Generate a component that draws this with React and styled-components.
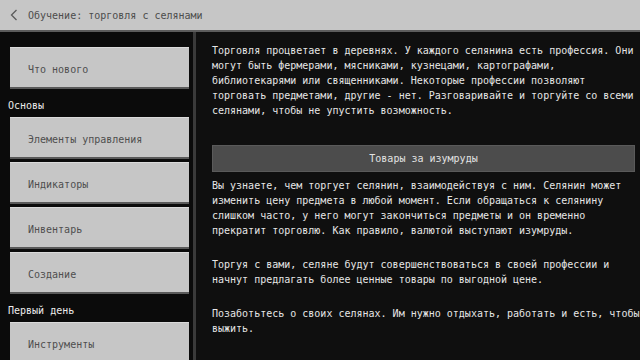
import React from "react";
import styled, { createGlobalStyle } from "styled-components";

const Global = createGlobalStyle`
  html, body { margin: 0; padding: 0; background: #0e0e0e; }
  body { width: 640px; height: 360px; overflow: hidden; font-family: "DejaVu Sans Mono", "Liberation Mono", monospace; }
  * { box-sizing: border-box; }
`;

const Screen = styled.div`
  width: 640px;
  height: 360px;
  display: flex;
  flex-direction: column;
  overflow: hidden;
`;

const Header = styled.div`
  height: 32px;
  flex: none;
  background: #c6c6c6;
  border-bottom: 2px solid #5c5c5c;
  display: flex;
  align-items: center;
  padding-left: 10px;
  gap: 10px;
`;

const Title = styled.span`
  font-size: 10px;
  color: #4c4c4c;
  line-height: 1;
  padding-top: 2px;
`;

const Body = styled.div`
  flex: 1;
  display: flex;
  min-height: 0;
`;

const Sidebar = styled.div`
  width: 193px;
  flex: none;
  background: #0b0b0b;
  padding: 15px 4px 0 10px;
  display: flex;
  flex-direction: column;
  overflow: hidden;
`;

const Divider = styled.div`
  width: 3px;
  flex: none;
  background: #3a3a3a;
`;

const NavButton = styled.div`
  height: 42px;
  flex: none;
  margin-bottom: 3px;
  background: #c6c6c6;
  border-top: 1px solid #dadada;
  border-bottom: 2px solid #5a5a5a;
  display: flex;
  align-items: center;
  padding: 3px 0 0 18px;
  font-size: 10px;
  color: #4e4e4e;
`;

const SectionLabel = styled.div`
  height: 25px;
  flex: none;
  display: flex;
  align-items: center;
  padding-top: 1px;
  margin-left: -2px;
  font-size: 10px;
  color: #ececec;
`;

const Content = styled.div`
  flex: 1;
  background: #0f0f0f;
  padding: 11px 0 0 16px;
  overflow: hidden;
`;

const Para = styled.p`
  margin: 0 0 19px;
  width: 429px;
  font-size: 10px;
  line-height: 15px;
  color: #e6e6e6;
`;

const Bar = styled.div`
  width: 423px;
  height: 27px;
  margin: 27px 0 6px;
  background: #4c4c4c;
  border: 1px solid #5a5a5a;
  display: flex;
  align-items: center;
  justify-content: center;
  font-size: 10px;
  color: #e2e2e2;
`;

const BackIcon = () => (
  <svg width="8" height="12" viewBox="0 0 8 12">
    <polyline points="6.5,1 1.5,6 6.5,11" fill="none" stroke="#5a5a5a" strokeWidth="1.3" />
  </svg>
);

const nav = [
  { type: "btn", text: "Что нового" },
  { type: "label", text: "Основы" },
  { type: "btn", text: "Элементы управления" },
  { type: "btn", text: "Индикаторы" },
  { type: "btn", text: "Инвентарь" },
  { type: "btn", text: "Создание" },
  { type: "label", text: "Первый день" },
  { type: "btn", text: "Инструменты" },
];

export default function App() {
  return (
    <Screen>
      <Global />
      <Header>
        <BackIcon />
        <Title>Обучение: торговля с селянами</Title>
      </Header>
      <Body>
        <Sidebar>
          {nav.map((n, i) =>
            n.type === "btn" ? (
              <NavButton key={i}>{n.text}</NavButton>
            ) : (
              <SectionLabel key={i}>{n.text}</SectionLabel>
            )
          )}
        </Sidebar>
        <Divider />
        <Content>
          <Para style={{ marginBottom: 0 }}>
            Торговля процветает в деревнях. У каждого селянина есть профессия. Они могут быть фермерами, мясниками, кузнецами, картографами, библиотекарями или священниками. Некоторые профессии позволяют торговать предметами, другие - нет. Разговаривайте и торгуйте со всеми селянами, чтобы не упустить возможность.
          </Para>
          <Bar>Товары за изумруды</Bar>
          <Para>
            Вы узнаете, чем торгует селянин, взаимодействуя с ним. Селянин может изменить цену предмета в любой момент. Если обращаться к селянину слишком часто, у него могут закончиться предметы и он временно прекратит торговлю. Как правило, валютой выступают изумруды.
          </Para>
          <Para>
            Торгуя с вами, селяне будут совершенствоваться в своей профессии и начнут предлагать более ценные товары по выгодной цене.
          </Para>
          <Para>
            Позаботьтесь о своих селянах. Им нужно отдыхать, работать и есть, чтобы выжить.
          </Para>
        </Content>
      </Body>
    </Screen>
  );
}
